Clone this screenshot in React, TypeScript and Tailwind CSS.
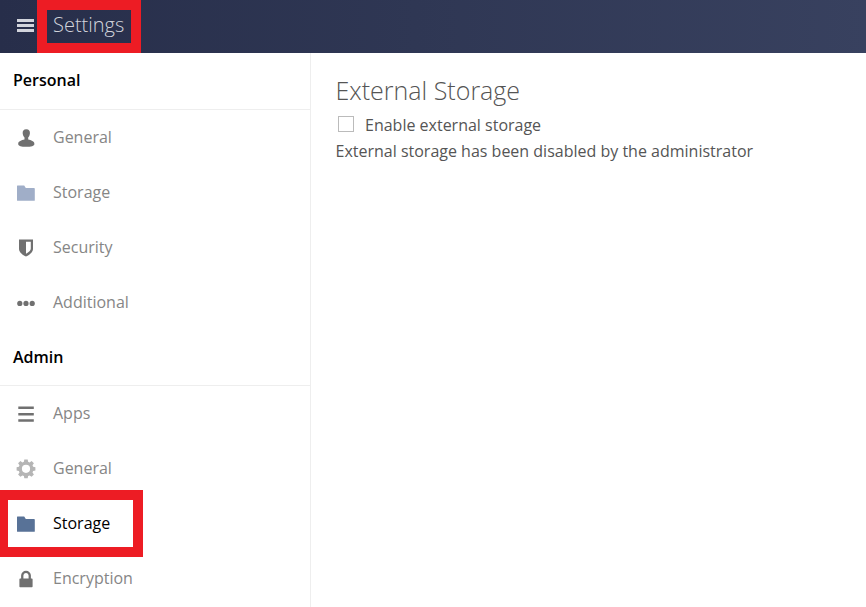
import type { ReactNode } from "react";

function Glyph({ children, className }: { children: ReactNode; className: string }) {
  return (
    <svg viewBox="0 0 20 20" className={`h-5 w-5 shrink-0 ${className}`} fill="currentColor">
      {children}
    </svg>
  );
}

const icons = {
  user: (
    <path d="M10.3 1.3C7.6 1.3 6.4 3.1 6.7 5.6c.2 2 1 3.1 1.8 3.9v2.1c-2.9.7-6.3 1.6-6.3 4.3 0 1.9 3.2 2.9 8.1 2.9s8.1-1 8.1-2.9c0-2.7-3.4-3.6-6.2-4.3V9.500c.8-.8 1.500-1.900 1.700-3.900.3-2.500-.9-4.300-3.600-4.300Z" />
  ),
  folder: <path d="M1.4 2.6h6.8l1.600 2.400H18c.5 0 .8.300.8.800v11.400c0 .4-.2.600-.6.600H1.600c-.4 0-.6-.2-.6-.6V3c0-.2.200-.4.400-.4Z" />,
  shield: (
    <path
      fillRule="evenodd"
      d="M3 1.500h14v9.200c0 3.500-3.500 6.200-7 7.800-3.500-1.600-7-4.300-7-7.800Zm7 2.200v12c2.900-1.500 4.800-3 4.800-5.200V3.700Z"
    />
  ),
  dots: (
    <>
      <circle cx="3.800" cy="10.400" r="2.600" />
      <circle cx="10" cy="10.400" r="2.600" />
      <circle cx="16.200" cy="10.400" r="2.600" />
    </>
  ),
  list: <path d="M2.300 2.500h15.500v2.500H2.300zM2.300 9h15.500v2.500H2.300zM2.300 15.300h15.500v2.500H2.300z" />,
  gear: (
    <path
      fillRule="evenodd"
      d="M8.3.5h3.400l.4 2.300 1.500.6 2-1.400 2.300 2.300-1.400 2 .6 1.500 2.300.4v3.400l-2.300.4-.6 1.500 1.400 2-2.300 2.300-2-1.400-1.500.6-.4 2.300H8.300l-.4-2.300-1.500-.6-2 1.400L2.100 15.500l1.400-2-.6-1.500-2.300-.4V8.200l2.300-.4.600-1.500-1.400-2 2.300-2.300 2 1.400 1.500-.6ZM10 5.700a4.100 4.100 0 1 0 0 8.200 4.100 4.100 0 0 0 0-8.200Z"
    />
  ),
  lock: (
    <path
      fillRule="evenodd"
      d="M10 1.700a4.900 4.900 0 0 0-4.900 4.900v3h-1c-.4 0-.7.300-.7.700v7.200c0 .4.300.7.700.7h11.800c.4 0 .7-.3.700-.7v-7.200c0-.4-.3-.7-.7-.7h-1v-3A4.900 4.900 0 0 0 10 1.700Zm0 2.400a2.500 2.500 0 0 1 2.600 2.500v3H7.400v-3A2.500 2.500 0 0 1 10 4.100Z"
    />
  ),
};

type Item = { label: string; icon: keyof typeof icons; tint: string; active?: boolean };

const personal: Item[] = [
  { label: "General", icon: "user", tint: "text-[#707070]" },
  { label: "Storage", icon: "folder", tint: "text-[#a0aec8]" },
  { label: "Security", icon: "shield", tint: "text-[#707070]" },
  { label: "Additional", icon: "dots", tint: "text-[#707070]" },
];

const admin: Item[] = [
  { label: "Apps", icon: "list", tint: "text-[#707070]" },
  { label: "General", icon: "gear", tint: "text-[#b5b5b5]" },
  { label: "Storage", icon: "folder", tint: "text-[#587297]", active: true },
  { label: "Encryption", icon: "lock", tint: "text-[#707070]" },
];

function Section({ title, items, heading }: { title: string; items: Item[]; heading: string }) {
  return (
    <section>
      <h2 className={`${heading} border-b border-[#eee] pt-[15px] pl-[13px] text-base/6 font-semibold text-black`}>
        {title}
      </h2>
      <ul>
        {items.map((item) => (
          <li key={item.label} className="relative flex h-[55px] items-center pl-4">
            <Glyph className={item.tint}>{icons[item.icon]}</Glyph>
            <span
              className={`mb-[2px] ml-[17px] text-base/6 ${item.active ? "text-black" : "text-[#868686]"}`}
            >
              {item.label}
            </span>
            {item.active && (
              <span className="absolute -top-[6px] left-0 h-[67px] w-[143px] border-[10px] border-l-8 border-[#ed1c24]" />
            )}
          </li>
        ))}
      </ul>
    </section>
  );
}

export default function App() {
  return (
    <div className="flex h-[607px] w-[866px] flex-col overflow-hidden bg-white font-['Open_Sans',sans-serif]">
      <header className="flex h-[53px] shrink-0 bg-linear-to-r from-[#272e4a] to-[#38415f]">
        <div className="flex w-[37px] flex-col gap-[2px] pt-[19px] pl-[17px]">
          <span className="h-[3px] w-[17px] bg-[#d2d4dc]" />
          <span className="h-[3px] w-[17px] bg-[#d2d4dc]" />
          <span className="h-[3px] w-[17px] bg-[#d2d4dc]" />
        </div>
        <div className="h-[53px] w-[104px] border-[10px] border-[#ed1c24] pl-[6px] text-xl/[30px] font-light text-[#d2d4dc]">
          Settings
        </div>
      </header>
      <div className="flex min-h-0 flex-1">
        <nav className="w-[311px] shrink-0 border-r border-[#eee]">
          <Section title="Personal" items={personal} heading="h-[57px]" />
          <Section title="Admin" items={admin} heading="h-[56px]" />
        </nav>
        <main className="pt-[19px] pl-[24.5px] text-[#555]">
          <h1 className="text-[25px]/[36px] font-light">External Storage</h1>
          <label className="flex h-[32px] items-center">
            <span className="mb-px ml-[2.500px] h-4 w-4 border border-[#bbb]" />
            <span className="mt-px ml-[11px] text-base/6">Enable external storage</span>
          </label>
          <p className="-mt-px text-base/6">External storage has been disabled by the administrator</p>
        </main>
      </div>
    </div>
  );
}
